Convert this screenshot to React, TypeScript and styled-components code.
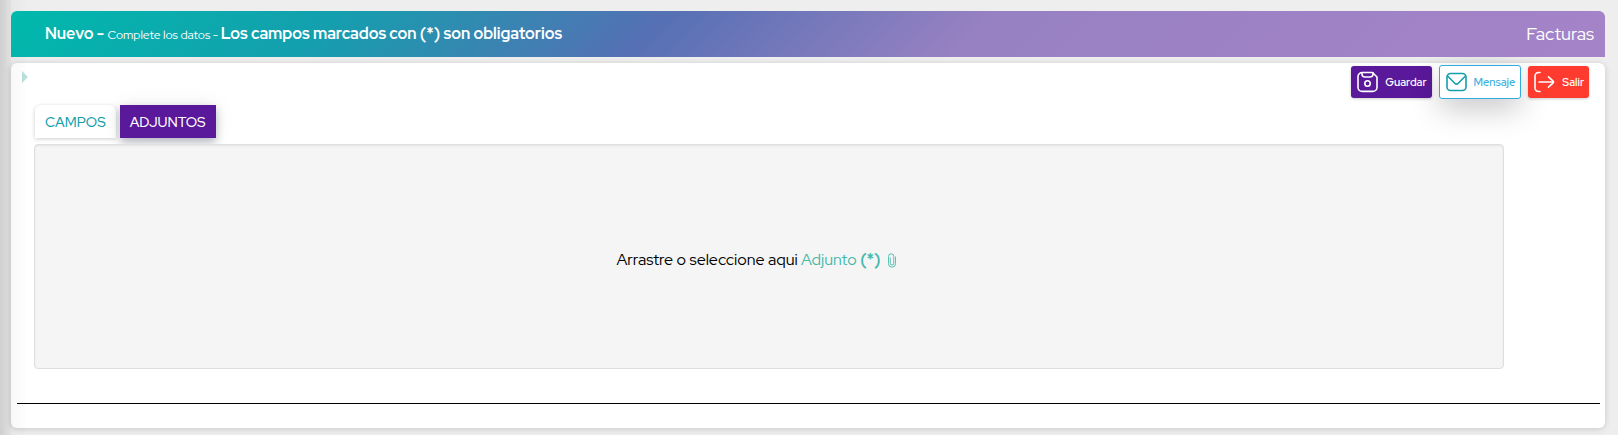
import React, { useState } from "react";
import styled, { createGlobalStyle, css } from "styled-components";

const GlobalStyle = createGlobalStyle`
  *, *::before, *::after { box-sizing: border-box; }
  body {
    margin: 0;
    background: #eeeeee;
    font-family: "Red Hat Display", Lato, "Open Sans", sans-serif;
    color: #212529;
  }
  button { font-family: inherit; cursor: pointer; }
`;

const Page = styled.main`
  position: relative;
  display: flex;
  flex-direction: column;
  gap: 6px;
  min-height: 100vh;
  padding: 11px 13px 7px 11px;

  &::after {
    content: "";
    position: absolute;
    inset: 0 auto 0 0;
    width: 25px;
    background: linear-gradient(90deg, rgba(0, 0, 0, 0.13), rgba(0, 0, 0, 0.05) 11px, rgba(0, 0, 0, 0.01));
    mask-image: linear-gradient(90deg, #000 11px, rgba(0, 0, 0, 0.5) 11px);
    pointer-events: none;
  }
`;

const Header = styled.header`
  position: relative;
  z-index: 1;
  display: flex;
  align-items: center;
  justify-content: space-between;
  height: 46px;
  padding: 0 11px 0 34px;
  border-radius: 6px 6px 0 0;
  color: #ffffff;
  background: linear-gradient(135deg, #00b9ac 0%, #149fae 20%, #5570b4 40%, #9781c2 60%, #a583c8 100%);
`;

const Heading = styled.h1`
  margin: 0;
  font-size: 16px;
  line-height: 24px;
  font-weight: 700;
`;

const Hint = styled.span`
  font-size: 12px;
  font-weight: 400;
`;

const Section = styled.span`
  font-size: 18px;
  line-height: 24px;
`;

const Panel = styled.section`
  flex: 1;
  display: flex;
  flex-direction: column;
  padding: 2px 5px 0 6px;
  border-radius: 6px;
  background: #ffffff;
  box-shadow: 0 1px 6px rgba(0, 0, 0, 0.16);
`;

const TopRow = styled.div`
  display: flex;
  align-items: flex-start;
  justify-content: space-between;
  padding: 0 11px 0 5px;
`;

const Expander = styled.button`
  display: flex;
  margin-top: 6px;
  padding: 0;
  border: 0;
  background: none;
`;

const Actions = styled.div`
  display: flex;
  align-items: center;
  gap: 7px;
`;

const variants = {
  primary: css`
    color: #ffffff;
    background: #5a189a;
  `,
  outline: css`
    height: 34px;
    color: #3fb1e3;
    background: #ffffff;
    border: 1px solid #31aae0;
    box-shadow: 0 10px 30px rgba(0, 0, 0, 0.22);
  `,
  danger: css`
    color: #ffffff;
    background: #ff3b30;
  `,
};

const Action = styled.button<{ $variant: keyof typeof variants }>`
  display: flex;
  align-items: center;
  gap: 6px;
  height: 32px;
  padding: 0 5px 0 6px;
  border: 0;
  border-radius: 3px;
  font-size: 11px;
  line-height: 16px;
  font-weight: 600;
  box-shadow: 0 1px 3px rgba(0, 0, 0, 0.2);
  ${(p) => variants[p.$variant]}
`;

const Tabs = styled.div`
  display: flex;
  gap: 4px;
  margin: 6px 0 0 18px;
`;

const Tab = styled.button<{ $active: boolean }>`
  height: 33px;
  padding: 0 10px;
  border: 0;
  font-size: 14px;
  line-height: 20px;
  font-weight: 500;
  ${(p) =>
    p.$active
      ? css`
          color: #ffffff;
          background: #5a189a;
          box-shadow: 0 4px 8px rgba(30, 40, 70, 0.3), 0 0 20px rgba(0, 0, 0, 0.08);
        `
      : css`
          color: #159fae;
          background: #ffffff;
          border-radius: 6px 6px 0 0;
          box-shadow: 0 1px 4px rgba(0, 0, 0, 0.2);
        `}
`;

const DropZone = styled.label`
  position: relative;
  display: flex;
  align-items: center;
  justify-content: center;
  height: 225px;
  margin: 6px 96px 0 17px;
  padding: 7px 26px 0 0;
  border: 1px solid #dfdfdf;
  border-radius: 4px;
  background: #f5f5f5;
  box-shadow: inset 0 1px 2px rgba(0, 0, 0, 0.08);
  color: #000000;
  font-size: 16px;
  line-height: 24px;
  font-weight: 400;
  white-space: pre;
  cursor: pointer;
`;

const FileInput = styled.input`
  position: absolute;
  inset: 0;
  opacity: 0;
  cursor: pointer;
`;

const Accent = styled.span`
  color: #45b8ac;
`;

const Required = styled.b`
  font-weight: 700;
`;

const ClipIcon = styled.svg`
  margin-left: 7px;
`;

const Divider = styled.hr`
  width: 100%;
  margin: 34px 0 24px;
  border: 0;
  border-top: 1px solid #000000;
`;

const iconProps = {
  width: 22,
  height: 22,
  viewBox: "0 0 22 22",
  fill: "none",
  strokeWidth: 1.6,
  strokeLinecap: "round" as const,
  strokeLinejoin: "round" as const,
  "aria-hidden": true,
};

const SaveIcon = () => (
  <svg {...iconProps} stroke="#ffffff">
    <path d="M5.2 1.5H15.5L20 6v10.2a4.2 4.2 0 0 1-4.2 4.2H5.2A4.2 4.2 0 0 1 1 16.2V5.7A4.2 4.2 0 0 1 5.2 1.5Z" />
    <path d="M5 1.8v1.2a3 3 0 0 0 3 3h5a3 3 0 0 0 3-3V1.8" />
    <circle cx="10.5" cy="12.5" r="2.7" />
  </svg>
);

const MailIcon = () => (
  <svg {...iconProps} stroke="#159fae">
    <rect x="1" y="2.5" width="19" height="17" rx="3.5" />
    <path d="M1.5 5l7.3 7.3a2.5 2.5 0 0 0 3.4 0L19.5 5" />
  </svg>
);

const ExitIcon = () => (
  <svg {...iconProps} stroke="#ffffff">
    <path d="M6 1.5H4.5A3.5 3.5 0 0 0 1 5v12a3.5 3.5 0 0 0 3.5 3.5H6" />
    <path d="M5 11h14.5M14.5 5.8l4.6 4.3a1.2 1.2 0 0 1 0 1.8l-4.6 4.3" />
  </svg>
);

const TABS = ["CAMPOS", "ADJUNTOS"];

export default function App() {
  const [active, setActive] = useState("ADJUNTOS");
  return (
    <>
      <GlobalStyle />
      <Page>
        <Header>
          <Heading>
            Nuevo - <Hint>Complete los datos - </Hint>Los campos marcados con (*) son obligatorios
          </Heading>
          <Section>Facturas</Section>
        </Header>
        <Panel>
          <TopRow>
            <Expander type="button" aria-label="Expandir">
              <svg width="6" height="12" viewBox="0 0 6 12" fill="#b9e2df" aria-hidden>
                <path d="M0 0l6 6-6 6z" />
              </svg>
            </Expander>
            <Actions>
              <Action type="button" $variant="primary"><SaveIcon />Guardar</Action>
              <Action type="button" $variant="outline"><MailIcon />Mensaje</Action>
              <Action type="button" $variant="danger"><ExitIcon />Salir</Action>
            </Actions>
          </TopRow>
          <Tabs role="tablist">
            {TABS.map((name) => (
              <Tab
                key={name}
                type="button"
                role="tab"
                aria-selected={active === name}
                $active={active === name}
                onClick={() => setActive(name)}
              >
                {name}
              </Tab>
            ))}
          </Tabs>
          <DropZone>
            <FileInput type="file" />
            <span>Arrastre o seleccione aqui <Accent>Adjunto <Required>(*)</Required></Accent></span>
            <ClipIcon width="8" height="15" viewBox="0 0 9 16" fill="none" stroke="#45b8ac" strokeLinecap="round" aria-hidden>
              <path d="M8.5 4v7.5a4 4 0 0 1-8 0V3.5a3 3 0 0 1 6 0v7.5a2 2 0 0 1-4 0V5" />
            </ClipIcon>
          </DropZone>
          <Divider />
        </Panel>
      </Page>
    </>
  );
}
